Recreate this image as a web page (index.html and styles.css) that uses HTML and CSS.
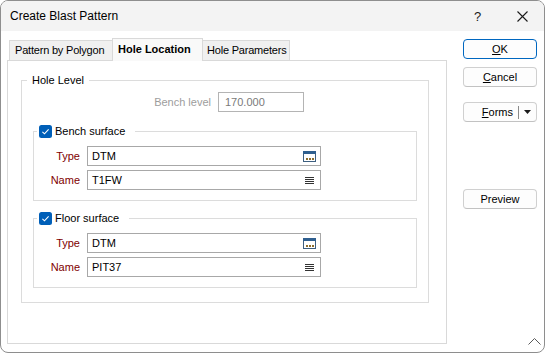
FILE: index.html
```html
<!DOCTYPE html>
<html lang="en">
<head>
    <meta charset="utf-8">
    <title>Create Blast Pattern</title>
    <link rel="stylesheet" href="styles.css">
</head>
<body>
<div class="window">
    <div class="titlebar">
        <span class="title">Create Blast Pattern</span>
        <span class="help">?</span>
        <span class="close">
            <svg width="11" height="11" viewBox="0 0 11 11"><path d="M0.5 0.5 L10.5 10.5 M10.5 0.5 L0.5 10.5" stroke="#1a1a1a" stroke-width="1.1"/></svg>
        </span>
    </div>

    <div class="dialog-body">
        <div class="tab-control">
            <div class="tabstrip">
                <div class="tab tab-polygon">Pattern by Polygon</div>
                <div class="tab tab-location selected">Hole Location</div>
                <div class="tab tab-params">Hole Parameters</div>
            </div>

            <div class="tab-page">
                <fieldset class="group hole-level">
                    <legend>Hole Level</legend>
                    <div class="bench-level">
                        <span class="bench-label">Bench level</span>
                        <div class="input disabled">170.000</div>
                    </div>

                    <fieldset class="group surface">
                        <legend>
                            <span class="check-label">
                                <svg class="checkbox" width="13" height="13" viewBox="0 0 13 13"><rect x="0" y="0" width="13" height="13" rx="2.5" fill="#005fb8"/><path d="M3.4 6.8 L5.5 8.8 L9.6 4.3" fill="none" stroke="#fff" stroke-width="1.1"/></svg>
                                Bench surface
                            </span>
                        </legend>
                        <div class="field-grid">
                            <span class="field-label">Type</span>
                            <div class="input">
                                <span>DTM</span>
                                <svg class="browse" width="13" height="11" viewBox="0 0 13 11"><rect x="0.5" y="0.5" width="12" height="10" fill="#fff" stroke="#3d5f80"/><rect x="0" y="0" width="13" height="3" fill="#2f5f8f"/><rect x="3" y="7" width="2" height="2" fill="#8c6d2c"/><rect x="6" y="7" width="2" height="2" fill="#8c6d2c"/><rect x="9" y="7" width="2" height="2" fill="#8c6d2c"/></svg>
                            </div>
                            <span class="field-label">Name</span>
                            <div class="input">
                                <span>T1FW</span>
                                <svg class="list" width="9" height="7" viewBox="0 0 9 7"><path d="M0 0.5 H9 M0 2.5 H9 M0 4.5 H9 M0 6.5 H9" stroke="#333" stroke-width="1"/></svg>
                            </div>
                        </div>
                    </fieldset>

                    <fieldset class="group surface floor">
                        <legend>
                            <span class="check-label">
                                <svg class="checkbox" width="13" height="13" viewBox="0 0 13 13"><rect x="0" y="0" width="13" height="13" rx="2.5" fill="#005fb8"/><path d="M3.4 6.8 L5.5 8.8 L9.6 4.3" fill="none" stroke="#fff" stroke-width="1.1"/></svg>
                                Floor surface
                            </span>
                        </legend>
                        <div class="field-grid">
                            <span class="field-label">Type</span>
                            <div class="input">
                                <span>DTM</span>
                                <svg class="browse" width="13" height="11" viewBox="0 0 13 11"><rect x="0.5" y="0.5" width="12" height="10" fill="#fff" stroke="#3d5f80"/><rect x="0" y="0" width="13" height="3" fill="#2f5f8f"/><rect x="3" y="7" width="2" height="2" fill="#8c6d2c"/><rect x="6" y="7" width="2" height="2" fill="#8c6d2c"/><rect x="9" y="7" width="2" height="2" fill="#8c6d2c"/></svg>
                            </div>
                            <span class="field-label">Name</span>
                            <div class="input">
                                <span>PIT37</span>
                                <svg class="list" width="9" height="7" viewBox="0 0 9 7"><path d="M0 0.5 H9 M0 2.5 H9 M0 4.5 H9 M0 6.5 H9" stroke="#333" stroke-width="1"/></svg>
                            </div>
                        </div>
                    </fieldset>
                </fieldset>
            </div>
        </div>

        <div class="button-column">
            <button class="btn btn-ok"><u>O</u>K</button>
            <button class="btn btn-cancel"><u>C</u>ancel</button>
            <button class="btn btn-forms">
                <span class="forms-label"><u>F</u>orms</span>
                <span class="divider"></span>
                <span class="arrow"><svg width="7" height="4" viewBox="0 0 7 4"><path d="M0 0 H7 L3.5 4 Z" fill="#1a1a1a"/></svg></span>
            </button>
            <button class="btn btn-preview">Preview</button>
        </div>
    </div>

    <svg class="grip" width="13" height="7" viewBox="0 0 13 7"><path d="M0.5 6.5 L6.5 0.5 L12.5 6.5" fill="none" stroke="#5a5a5a" stroke-width="1"/></svg>
</div>
</body>
</html>
```

FILE: styles.css
```css
* {
    box-sizing: border-box;
}

body {
    margin: 0;
    font-family: "Liberation Sans", Arial, sans-serif;
    font-size: 11px;
    color: #000;
    background: #fff;
}

.window {
    position: relative;
    width: 545px;
    height: 353px;
    border: 1px solid #8e8e8e;
    border-radius: 8px;
    overflow: hidden;
    background: #fff;
}

/* title bar */
.titlebar {
    display: flex;
    align-items: center;
    height: 30px;
    padding-left: 9px;
    background: #f3f3f3;
}

.title {
    flex: 1;
    font-size: 12px;
}

.help {
    width: 7px;
    margin-right: 36px;
    font-size: 13px;
    color: #1a1a1a;
}

.close {
    display: flex;
    margin-right: 16px;
}

.dialog-body {
    display: flex;
    padding-left: 6px;
}

/* tabs */
.tab-control {
    width: 440px;
    margin-top: 7px;
}

.tabstrip {
    position: relative;
    z-index: 1;
    display: flex;
    align-items: flex-end;
    height: 22px;
    padding-left: 2px;
}

.tab {
    height: 20px;
    padding-left: 5px;
    line-height: 19px;
    white-space: nowrap;
    letter-spacing: -0.2px;
    background: #f0f0f0;
    border: 1px solid #d9d9d9;
    border-bottom: none;
}

.tab + .tab {
    margin-left: -1px;
}

.tab-polygon {
    width: 104px;
}

.tab-location {
    width: 91px;
}

.tab-params {
    width: 88px;
    padding-left: 4px;
}

.tab.selected {
    height: 23px;
    margin-bottom: -1px;
    padding-top: 1px;
    line-height: 19px;
    font-weight: bold;
    letter-spacing: 0;
    background: #f9f9f9;
}

.tab-page {
    height: 284px;
    padding: 12px 0 0 13px;
    border: 1px solid #d9d9d9;
}

/* group boxes */
.group {
    margin: 0;
    padding: 0;
    min-width: 0;
    border: 1px solid #dcdcdc;
}

.group legend {
    height: 15px;
    margin-left: 5px;
    padding: 0 5px;
    line-height: 15px;
}

.hole-level {
    width: 408px;
    padding-bottom: 14px;
}

.bench-level {
    display: flex;
    align-items: center;
    margin-top: 4px;
}

.bench-label {
    width: 189px;
    text-align: right;
    color: #9d9d9d;
}

.bench-level .input {
    width: 86px;
    margin-left: 7px;
    padding-left: 6px;
}

.surface {
    width: 384px;
    margin: 12px 0 0 11px;
    padding-bottom: 10px;
}

.surface.floor {
    margin-top: 10px;
}

.surface legend {
    margin-left: 3px;
    padding: 0 10px 0 2px;
}

.check-label {
    display: flex;
    align-items: center;
    gap: 3px;
}

.field-grid {
    display: grid;
    grid-template-columns: 46px 234px;
    column-gap: 7px;
    row-gap: 4px;
    margin-top: 7px;
}

.field-label {
    line-height: 20px;
    text-align: right;
    color: #800000;
}

.input {
    display: flex;
    align-items: center;
    justify-content: space-between;
    height: 20px;
    padding: 0 4px 0 4px;
    border: 1px solid #a8a8a8;
    background: #fff;
}

.input.disabled {
    color: #7a7a7a;
    border-color: #b4b4b4;
}

.input .list {
    margin-right: 2px;
}

/* buttons */
.button-column {
    display: flex;
    flex-direction: column;
    width: 74px;
    margin: 8px 0 0 16px;
}

.btn {
    display: flex;
    align-items: center;
    justify-content: center;
    width: 74px;
    height: 20px;
    padding: 0;
    font-family: inherit;
    font-size: 11px;
    color: #000;
    background: #fdfdfd;
    border: 1px solid #d0d0d0;
    border-bottom-color: #c2c2c2;
    border-radius: 4px;
}

.btn-ok {
    border-color: #0067c0;
}

.btn-cancel {
    margin-top: 8px;
}

.btn-forms {
    justify-content: flex-end;
    margin-top: 15px;
}

.forms-label {
    padding-right: 5px;
}

.divider {
    width: 1px;
    height: 13px;
    background: #8a8a8a;
}

.arrow {
    display: flex;
    justify-content: center;
    width: 17px;
}

.btn-preview {
    margin-top: 67px;
}

.grip {
    position: absolute;
    left: 527px;
    top: 337px;
}
```
